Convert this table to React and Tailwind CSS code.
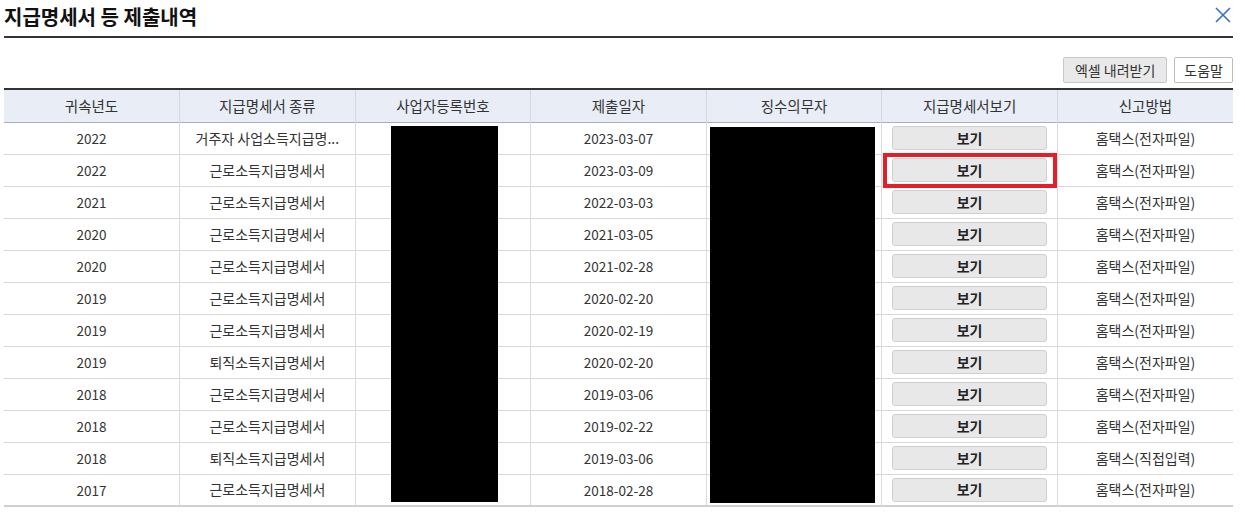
import React from 'react';

const rows = [
  ['2022', '거주자 사업소득지급명...', '2023-03-07', '홈택스(전자파일)'],
  ['2022', '근로소득지급명세서', '2023-03-09', '홈택스(전자파일)'],
  ['2021', '근로소득지급명세서', '2022-03-03', '홈택스(전자파일)'],
  ['2020', '근로소득지급명세서', '2021-03-05', '홈택스(전자파일)'],
  ['2020', '근로소득지급명세서', '2021-02-28', '홈택스(전자파일)'],
  ['2019', '근로소득지급명세서', '2020-02-20', '홈택스(전자파일)'],
  ['2019', '근로소득지급명세서', '2020-02-19', '홈택스(전자파일)'],
  ['2019', '퇴직소득지급명세서', '2020-02-20', '홈택스(전자파일)'],
  ['2018', '근로소득지급명세서', '2019-03-06', '홈택스(전자파일)'],
  ['2018', '근로소득지급명세서', '2019-02-22', '홈택스(전자파일)'],
  ['2018', '퇴직소득지급명세서', '2019-03-06', '홈택스(직접입력)'],
  ['2017', '근로소득지급명세서', '2018-02-28', '홈택스(전자파일)'],
];

const heads = ['귀속년도', '지급명세서 종류', '사업자등록번호', '제출일자', '징수의무자', '지급명세서보기', '신고방법'];

export default function App() {
  return (
    <div
      className="w-[1245px] h-[514px] bg-white pl-[4px] pr-[12px] text-[#333]"
      style={{ fontFamily: '"Noto Sans CJK KR", "Noto Sans", sans-serif' }}
    >
      <div className="h-[38px] flex items-center justify-between border-b-2 border-[#333]">
        <h1 className="text-[20px] font-bold text-[#111] -mt-[3px]">지급명세서 등 제출내역</h1>
        <svg className="w-[18px] h-[18px] -mt-[6px] mr-[1px]" viewBox="0 0 18 18" fill="none" stroke="#3b6fc6" strokeWidth="1.6">
          <path d="M2 2L16 16M16 2L2 16" />
        </svg>
      </div>

      <div className="flex justify-end gap-[7px] mt-[19px]">
        <button className="h-[26px] px-[11px] text-[14px] bg-[#e9e9e9] border border-[#c8c8c8] rounded-[2px] text-[#333]">
          엑셀 내려받기
        </button>
        <button className="h-[26px] px-[9px] text-[14px] bg-white border border-[#bcbcbc] rounded-[2px] text-[#333]">
          도움말
        </button>
      </div>

      <div className="relative mt-[5px]">
        <table className="w-full table-fixed border-collapse text-[14px]">
          <thead>
            <tr className="h-[33px] bg-[#e8edf6] border-t-2 border-[#333] border-b border-b-[#a9b0bb]">
              {heads.map((h, i) => (
                <th key={h} className={`font-normal text-[14.5px] text-[#333] ${i > 0 ? 'border-l border-[#d3d8e0]' : ''}`}>
                  {h}
                </th>
              ))}
            </tr>
          </thead>
          <tbody>
            {rows.map((r, idx) => (
              <tr key={idx} className={`h-[32px] ${idx === rows.length - 1 ? 'border-b-2 border-[#d0d0d0]' : 'border-b border-[#d8d8d8]'}`}>
                <td className="text-center text-[13.5px]">{r[0]}</td>
                <td className="text-center border-l border-[#dcdcdc] truncate px-[6px]">{r[1]}</td>
                <td className="border-l border-[#dcdcdc]"></td>
                <td className="text-center text-[13.5px] border-l border-[#dcdcdc]">{r[2]}</td>
                <td className="border-l border-[#dcdcdc]"></td>
                <td className="border-l border-[#dcdcdc] relative px-[10px]">
                  <button className="w-full h-[24px] bg-[#e8e8e8] border border-[#cfcfcf] rounded-[3px] font-semibold text-[14px] text-[#222] flex items-center justify-center">
                    보기
                  </button>
                  {idx === 1 && (
                    <div className="absolute -top-[2px] -bottom-[2px] left-[1px] right-[0px] border-4 border-[#e3202a]" />
                  )}
                </td>
                <td className="text-center border-l border-[#dcdcdc]">{r[3]}</td>
              </tr>
            ))}
          </tbody>
        </table>
        <div className="absolute left-[387px] top-[38px] w-[107px] h-[376px] bg-black" />
        <div className="absolute left-[706px] top-[39px] w-[165px] h-[376px] bg-black" />
      </div>
    </div>
  );
}
